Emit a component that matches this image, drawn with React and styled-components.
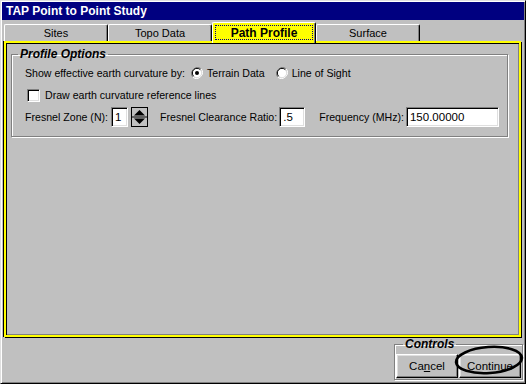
import React from "react";
import styled, { createGlobalStyle, css } from "styled-components";

const GlobalStyle = createGlobalStyle`
  html, body {
    margin: 0;
    padding: 0;
    background: #c0c0c0;
  }
  body {
    font-family: "Liberation Sans", Arial, sans-serif;
    font-size: 10.6px;
    color: #000;
  }
`;

const Window = styled.div`
  width: 526px;
  height: 384px;
  box-sizing: border-box;
  background: #c0c0c0;
  border: 1px solid;
  border-color: #dfdfdf #000 #000 #dfdfdf;
  box-shadow: inset 1px 1px 0 #fff, inset -1px -1px 0 #808080;
  padding: 1px;
  display: flex;
  flex-direction: column;
`;

const TitleBar = styled.div`
  height: 18px;
  flex: none;
  background: #000080;
  color: #fff;
  font-weight: bold;
  font-size: 12px;
  display: flex;
  align-items: center;
  padding-left: 4px;
`;

const TabRow = styled.div`
  height: 21px;
  flex: none;
  display: flex;
  align-items: flex-end;
  padding-left: 2px;
  position: relative;
  z-index: 2;
`;

const Tab = styled.div`
  width: 104px;
  height: 17px;
  box-sizing: border-box;
  display: flex;
  align-items: center;
  justify-content: center;
  background: #c0c0c0;
  border-top: 1px solid #fff;
  border-left: 1px solid #fff;
  border-right: 1px solid #000;
  box-shadow: inset -1px 0 0 #808080;
  border-radius: 2px 2px 0 0;
  font-size: 11px;
  ${(p) =>
    p.$active &&
    css`
      height: 21px;
      margin-bottom: -2px;
      background: #ffff00;
      font-weight: bold;
      font-size: 12px;
      padding: 2px 2px 3px 2px;
    `}
`;

const FocusRect = styled.div`
  flex: 1;
  align-self: stretch;
  display: flex;
  align-items: center;
  justify-content: center;
  border: 1px dotted #000080;
`;

const Panel = styled.div`
  height: 296px;
  flex: none;
  margin: 0 3px 1px 2px;
  box-sizing: border-box;
  border: 2px solid #ffff00;
  box-shadow: 1px 1px 0 #000, -1px 0 0 #000, inset 1px 1px 0 #000,
    inset -1px -1px 0 #808080;
  padding: 5px 11px 0 5px;
`;

const Group = styled.fieldset`
  margin: 0;
  padding: 0;
  border: 1px solid #808080;
  box-shadow: inset 1px 1px 0 #fff, 1px 1px 0 #fff;
  min-width: 0;
`;

const Legend = styled.legend`
  margin-left: ${(p) => p.$indent}px;
  padding: 0 2px;
  font-weight: bold;
  font-style: italic;
  font-size: 12px;
  line-height: 13px;
`;

const GroupBody = styled.div`
  padding: 4px 0 9px 13px;
  display: flex;
  flex-direction: column;
`;

const Row = styled.div`
  display: flex;
  align-items: center;
  height: ${(p) => p.$h}px;
  margin-top: ${(p) => p.$mt || 0}px;
  white-space: nowrap;
`;

const Label = styled.span`
  margin-left: ${(p) => p.$ml || 0}px;
`;

const RadioMark = styled.svg`
  margin-left: ${(p) => p.$ml || 0}px;
  margin-right: 4px;
  flex: none;
`;

const CheckBox = styled.div`
  width: 13px;
  height: 13px;
  box-sizing: border-box;
  margin-left: 2px;
  margin-right: 5px;
  background: #fff;
  border: 1px solid;
  border-color: #808080 #fff #fff #808080;
  box-shadow: inset 1px 1px 0 #000, inset -1px -1px 0 #dfdfdf;
`;

const TextBox = styled.div`
  width: ${(p) => p.$w}px;
  height: 20px;
  box-sizing: border-box;
  margin-left: ${(p) => p.$ml || 0}px;
  background: #fff;
  border: 1px solid;
  border-color: #808080 #fff #fff #808080;
  box-shadow: inset 1px 1px 0 #000, inset -1px -1px 0 #dfdfdf;
  display: flex;
  align-items: center;
  padding-left: 3px;
  font-size: 11.5px;
`;

const Spinner = styled.svg`
  margin-left: 3px;
  flex: none;
`;

const Footer = styled.div`
  flex: 1;
  display: flex;
  justify-content: flex-end;
  align-items: flex-start;
  padding-right: 1px;
`;

const Controls = styled.fieldset`
  margin: 0;
  padding: 3px 1px 1px 1px;
  border: 1px solid #808080;
  box-shadow: inset 1px 1px 0 #fff, 1px 1px 0 #fff;
  display: flex;
`;

const Button = styled.div`
  width: 62px;
  height: 24px;
  box-sizing: border-box;
  display: flex;
  align-items: center;
  justify-content: center;
  background: #c0c0c0;
  border: 1px solid;
  border-color: #fff #000 #000 #fff;
  box-shadow: inset -1px -1px 0 #808080, inset 1px 1px 0 #dfdfdf;
  font-size: 11.5px;
`;

const Circled = styled.div`
  position: relative;
  margin-left: 1px;
`;

const Ellipse = styled.svg`
  position: absolute;
  left: -5px;
  top: -11px;
  pointer-events: none;
`;

const Radio = ({ checked, ml }) => (
  <RadioMark $ml={ml} width="12" height="12" viewBox="0 0 12 12">
    <path d="M10.2 1.8 A6 6 0 0 0 1.8 10.2" stroke="#808080" strokeWidth="1" fill="none" />
    <path d="M1.8 10.2 A6 6 0 0 0 10.2 1.8" stroke="#fff" strokeWidth="1" fill="none" />
    <circle cx="6" cy="6" r="4.6" fill="#fff" />
    <path d="M9.3 2.7 A4.6 4.6 0 0 0 2.7 9.3" stroke="#000" strokeWidth="1" fill="none" />
    <path d="M2.7 9.3 A4.6 4.6 0 0 0 9.3 2.7" stroke="#dfdfdf" strokeWidth="1" fill="none" />
    {checked && <circle cx="6" cy="6" r="2" fill="#000" />}
  </RadioMark>
);

export default function App() {
  return (
    <>
      <GlobalStyle />
      <Window>
        <TitleBar>TAP Point to Point Study</TitleBar>
        <TabRow>
          <Tab>Sites</Tab>
          <Tab>Topo Data</Tab>
          <Tab $active>
            <FocusRect>Path Profile</FocusRect>
          </Tab>
          <Tab>Surface</Tab>
        </TabRow>
        <Panel>
          <Group>
            <Legend $indent={6}>Profile Options</Legend>
            <GroupBody>
              <Row $h={16}>
                <Label>Show effective earth curvature by:</Label>
                <Radio checked ml={6} />
                <Label>Terrain Data</Label>
                <Radio ml={11} />
                <Label>Line of Sight</Label>
              </Row>
              <Row $h={16} $mt={6}>
                <CheckBox />
                <Label>Draw earth curvature reference lines</Label>
              </Row>
              <Row $h={20} $mt={4}>
                <Label>Fresnel Zone (N):</Label>
                <TextBox $w={17} $ml={3}>1</TextBox>
                <Spinner width="17" height="20" viewBox="0 0 17 20">
                  <rect x="0.5" y="0.5" width="16" height="19" fill="#c0c0c0" stroke="#000" />
                  <line x1="1" y1="10" x2="16" y2="10" stroke="#000" />
                  <path d="M8.5 3 L14 8.5 L3 8.5 Z" fill="#000" />
                  <path d="M3 11.5 L14 11.5 L8.5 17 Z" fill="#000" />
                </Spinner>
                <Label $ml={12}>Fresnel Clearance Ratio:</Label>
                <TextBox $w={26} $ml={2}>.5</TextBox>
                <Label $ml={14}>Frequency (MHz):</Label>
                <TextBox $w={93} $ml={2}>150.00000</TextBox>
              </Row>
            </GroupBody>
          </Group>
        </Panel>
        <Footer>
          <Controls>
            <Legend $indent={7}>Controls</Legend>
            <Button>
              Ca<u>n</u>cel
            </Button>
            <Circled>
              <Button>Continue</Button>
              <Ellipse width="70" height="34" viewBox="0 0 70 34">
                <ellipse
                  cx="35"
                  cy="17"
                  rx="33"
                  ry="13"
                  transform="rotate(-4 35 17)"
                  fill="none"
                  stroke="#000"
                  strokeWidth="2.6"
                />
              </Ellipse>
            </Circled>
          </Controls>
        </Footer>
      </Window>
    </>
  );
}
